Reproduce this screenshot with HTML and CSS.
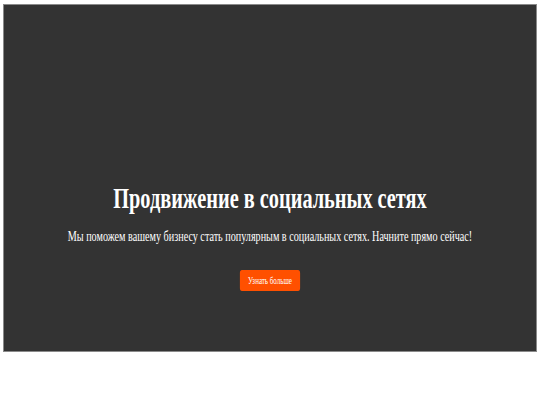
FILE: index.html
```html
<!DOCTYPE html>
<html lang="ru">
<head>
<meta charset="utf-8">
<title>Продвижение в социальных сетях</title>
<link rel="stylesheet" href="styles.css">
</head>
<body>
<section class="hero">
  <div class="hero-inner">
    <h1 class="hero-title">Продвижение в социальных сетях</h1>
    <p class="hero-text">Мы поможем вашему бизнесу стать популярным в социальных сетях. Начните прямо сейчас!</p>
    <a class="hero-btn" href="#">Узнать больше</a>
  </div>
</section>
</body>
</html>
```
FILE: styles.css
```css
html, body {
  margin: 0;
  padding: 0;
  background: #ffffff;
}

body {
  padding: 4px 3px 0 3px;
  font-family: "Liberation Serif", "Times New Roman", serif;
}

.hero {
  box-sizing: border-box;
  height: 348px;
  background: #333333;
  border: 1px solid #8a8a8a;
  display: flex;
  flex-direction: column;
  align-items: center;
  justify-content: flex-end;
  padding-bottom: 60px;
  color: #ffffff;
  text-align: center;
  overflow: hidden;
}

/* condensed headline block */
.hero-inner {
  width: 760px;
  flex: none;
  display: flex;
  flex-direction: column;
  align-items: center;
  transform: scaleX(0.7);
}

.hero-title {
  margin: 0;
  font-size: 29px;
  font-weight: bold;
}

.hero-text {
  margin: 13px 0 0;
  font-size: 14.5px;
}

.hero-btn {
  margin-top: 25px;
  display: inline-block;
  background: #ff5000;
  color: #ffffff;
  text-decoration: none;
  font-size: 10px;
  padding: 5px 12px;
  border-radius: 3px;
}
```
